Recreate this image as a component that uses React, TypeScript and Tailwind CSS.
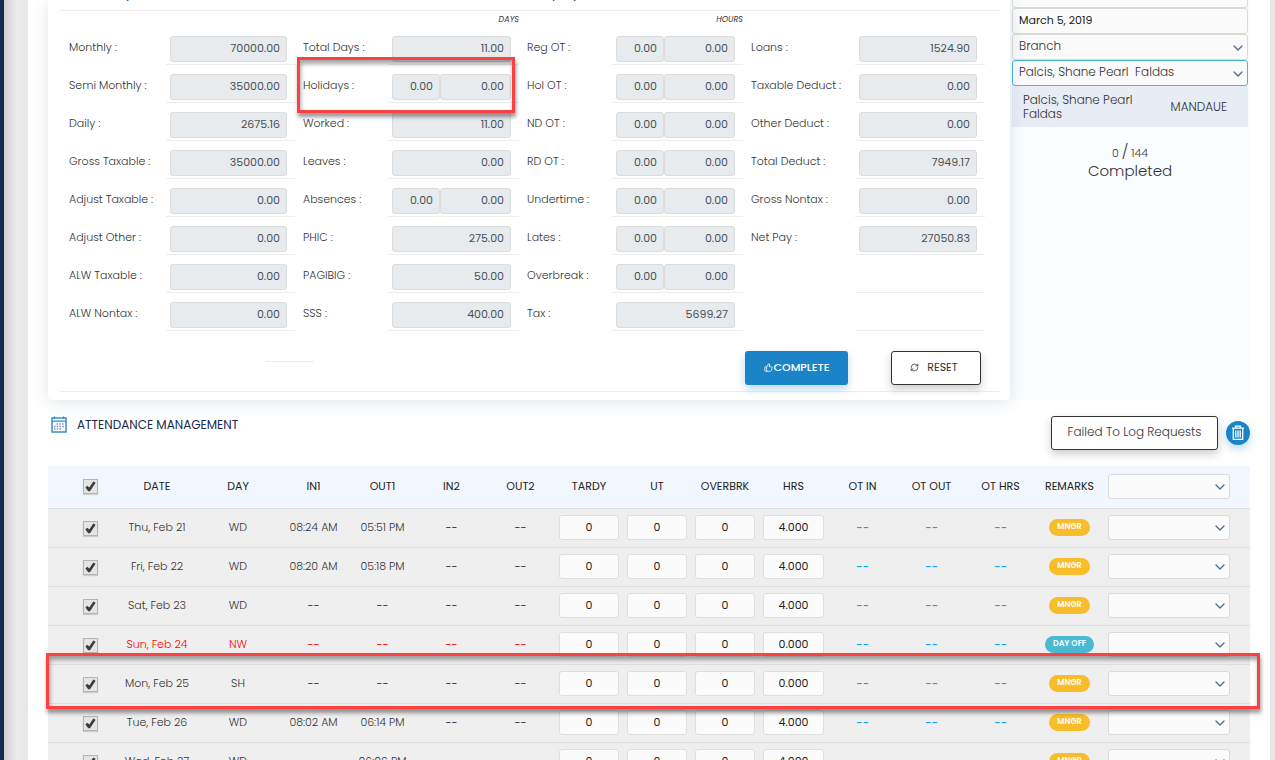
import React from "react";
import { LuChevronDown, LuRefreshCw, LuThumbsUp } from "react-icons/lu";

type Item = { label: string; values: string[]; marked?: boolean };

const columns: { unit?: string; cls: string; labelCls: string; items: Item[] }[] = [
  {
    cls: "w-[234px]",
    labelCls: "w-[97px]",
    items: [
      { label: "Monthly :", values: ["70000.00"] },
      { label: "Semi Monthly :", values: ["35000.00"] },
      { label: "Daily :", values: ["2675.16"] },
      { label: "Gross Taxable :", values: ["35000.00"] },
      { label: "Adjust Taxable :", values: ["0.00"] },
      { label: "Adjust Other :", values: ["0.00"] },
      { label: "ALW Taxable :", values: ["0.00"] },
      { label: "ALW Nontax :", values: ["0.00"] },
    ],
  },
  {
    unit: "DAYS",
    cls: "w-[224px]",
    labelCls: "w-[85px]",
    items: [
      { label: "Total Days :", values: ["11.00"] },
      { label: "Holidays :", values: ["0.00", "0.00"], marked: true },
      { label: "Worked :", values: ["11.00"] },
      { label: "Leaves :", values: ["0.00"] },
      { label: "Absences :", values: ["0.00", "0.00"] },
      { label: "PHIC :", values: ["275.00"] },
      { label: "PAGIBIG :", values: ["50.00"] },
      { label: "SSS :", values: ["400.00"] },
    ],
  },
  {
    unit: "HOURS",
    cls: "w-[224px]",
    labelCls: "w-[85px]",
    items: [
      { label: "Reg OT :", values: ["0.00", "0.00"] },
      { label: "Hol OT :", values: ["0.00", "0.00"] },
      { label: "ND OT :", values: ["0.00", "0.00"] },
      { label: "RD OT :", values: ["0.00", "0.00"] },
      { label: "Undertime :", values: ["0.00", "0.00"] },
      { label: "Lates :", values: ["0.00", "0.00"] },
      { label: "Overbreak :", values: ["0.00", "0.00"] },
      { label: "Tax :", values: ["5699.27"] },
    ],
  },
  {
    cls: "w-[242px]",
    labelCls: "w-[104px]",
    items: [
      { label: "Loans :", values: ["1524.90"] },
      { label: "Taxable Deduct :", values: ["0.00"] },
      { label: "Other Deduct :", values: ["0.00"] },
      { label: "Total Deduct :", values: ["7949.17"] },
      { label: "Gross Nontax :", values: ["0.00"] },
      { label: "Net Pay :", values: ["27050.83"] },
      { label: "", values: [] },
      { label: "", values: [] },
    ],
  },
];

const callout =
  "pointer-events-none absolute z-10 border-[3px] border-[#fb4141] shadow-[1px_4px_4px_rgba(0,0,0,0.4),inset_1px_4px_4px_rgba(0,0,0,0.35)]";

function AmountRow({ item, labelCls }: { item: Item; labelCls: string }) {
  const two = item.values.length === 2;
  return (
    <div className="relative flex h-[38px]">
      {item.label ? (
        <label htmlFor={item.label} className={`${labelCls} shrink-0 pt-2 leading-[18px] font-light`}>
          {item.label}
        </label>
      ) : (
        <span className={`${labelCls} shrink-0`} />
      )}
      <div className="mr-2 flex h-[35px] w-[131px] items-start border-b border-[#ececec] pt-[6px] pr-2 pl-1">
        {item.values.map((v, i) => (
          <input
            key={i}
            id={i === 0 ? item.label : undefined}
            aria-label={i > 0 ? `${item.label} hours` : undefined}
            readOnly
            defaultValue={v}
            className={`${two && i === 0 ? "w-12 shrink-0" : "w-0 grow"} h-[26px] min-w-0 rounded-[3px] border border-[#dadcde] bg-[#e8ebee] px-[6px] pb-[2px] text-right text-[11px] text-[#495057]`}
          />
        ))}
      </div>
      {item.marked && <div className={`${callout} -top-[11px] -left-[6px] h-14 w-[218px]`} />}
    </div>
  );
}

function Picker({ value, label, cls }: { value?: string; label: string; cls: string }) {
  return (
    <div className="relative">
      <select
        aria-label={label}
        className={`${cls} block w-full appearance-none rounded-[3px] border bg-[#fbfbfb] pb-[2px] pl-[6px] text-xs font-light text-[#333]`}
      >
        <option>{value ?? ""}</option>
      </select>
      <LuChevronDown className="pointer-events-none absolute right-[2px] bottom-1 size-4 text-[#50708c]" />
    </div>
  );
}

type Day = { date: string; day: string; in1: string; out1: string; hrs: string; off?: boolean; marked?: boolean };

const days: Day[] = [
  { date: "Thu, Feb 21", day: "WD", in1: "08:24 AM", out1: "05:51 PM", hrs: "4.000" },
  { date: "Fri, Feb 22", day: "WD", in1: "08:20 AM", out1: "05:18 PM", hrs: "4.000" },
  { date: "Sat, Feb 23", day: "WD", in1: "--", out1: "--", hrs: "4.000" },
  { date: "Sun, Feb 24", day: "NW", in1: "--", out1: "--", hrs: "0.000", off: true },
  { date: "Mon, Feb 25", day: "SH", in1: "--", out1: "--", hrs: "0.000", marked: true },
  { date: "Tue, Feb 26", day: "WD", in1: "08:02 AM", out1: "06:14 PM", hrs: "4.000" },
  { date: "Wed, Feb 27", day: "WD", in1: "--", out1: "06:06 PM", hrs: "4.000" },
];

const heads: [string, string][] = [
  ["DATE", "w-20"],
  ["DAY", "w-[82px]"],
  ["IN1", "w-[69px]"],
  ["OUT1", "w-[69px]"],
  ["IN2", "w-[69px]"],
  ["OUT2", "w-[69px]"],
  ["TARDY", "w-[68px]"],
  ["UT", "w-[68px]"],
  ["OVERBRK", "w-[68px]"],
  ["HRS", "w-[69px]"],
  ["OT IN", "w-[69px]"],
  ["OT OUT", "w-[69px]"],
  ["OT HRS", "w-[69px]"],
  ["REMARKS", "w-[69px]"],
];

function Tick({ label }: { label: string }) {
  return (
    <span className="relative ml-[35px] block size-[15px]">
      <input
        type="checkbox"
        defaultChecked
        aria-label={label}
        className="peer block size-[15px] appearance-none border border-[#b4b4b4] bg-[#e4e4e4] shadow-[0_1px_1px_rgba(0,0,0,0.15)]"
      />
      <svg viewBox="0 0 15 15" className="pointer-events-none absolute inset-0 hidden size-[15px] peer-checked:block">
        <path d="M2.4 8.4l1.9-1.7 2 1.7 4-6 2.3 1.4-5.6 8.4h-1.8z" fill="#3c3c3c" />
      </svg>
    </span>
  );
}

function DayRow({ d }: { d: Day }) {
  const tone = d.off ? "text-[#ff0000]" : "text-[#333]";
  return (
    <tr className="relative h-[39px] border-b border-[#dedede] bg-[#efefef]">
      <td className="pt-px">
        <Tick label={`Select ${d.date}`} />
        {d.marked && <div className={`${callout} -top-[11px] -right-[10px] -left-[2px] h-14`} />}
      </td>
      {[d.date, d.day, d.in1, d.out1, "--", "--"].map((t, i) => (
        <td key={i} className={`${tone} ${t === "--" ? "font-normal" : "font-light"} pb-px whitespace-nowrap`}>
          {t}
        </td>
      ))}
      {[
        ["Tardy", "0"],
        ["UT", "0"],
        ["Overbreak", "0"],
        ["Hours", d.hrs],
      ].map(([n, v]) => (
        <td key={n} className="px-1">
          <input
            aria-label={`${n} ${d.date}`}
            defaultValue={v}
            className="block h-[25px] w-full rounded-[3px] border border-[#dedede] bg-[#fbfbfb] pb-px text-center text-[11px] text-[#222]"
          />
        </td>
      ))}
      {[0, 1, 2].map((i) => (
        <td key={i} className="pb-px font-medium text-[#03a3ee]">
          --
        </td>
      ))}
      <td>
        <span
          className={`${d.off ? "bg-[#4ab9d2]" : "bg-[#f9bd2b]"} inline-block h-[17px] rounded-full px-2 align-middle text-[8px] leading-[15px] font-semibold whitespace-nowrap text-white`}
        >
          {d.off ? "DAY OFF" : "MNGR"}
        </span>
      </td>
      <td className="pr-5 pl-1">
        <Picker label={`Action ${d.date}`} cls="h-[25px] border-[#dadada]" />
      </td>
    </tr>
  );
}

function CalendarIcon() {
  return (
    <svg viewBox="0 0 16 17" className="h-[17px] w-4" fill="none" stroke="#2c86c8">
      <rect x="1" y="2" width="14" height="14" strokeWidth="1.4" />
      <path d="M1 5.2h14M3.5 .5v2.6M12.5 .5v2.6" strokeWidth="1.2" />
      <path d="M5.5 8h8M3 10.5h10.5M3 13h7" strokeDasharray="1.6 1.1" strokeWidth="1.4" stroke="#7c93cc" />
    </svg>
  );
}

function TrashIcon() {
  return (
    <svg viewBox="0 0 14 16" className="h-4 w-[14px]" fill="none" stroke="#fff" strokeWidth="1.3">
      <path d="M1 3.2h12M4.6 3V1.2h4.8V3M2.3 3.4v11h9.4v-11M4.8 5.5v7M7 5.5v7M9.2 5.5v7" />
    </svg>
  );
}

export default function App() {
  return (
    <div className="flex h-screen overflow-hidden bg-white font-['Poppins','Inter',sans-serif] text-[11px] text-[#333]">
      <div className="w-1 shrink-0 bg-[#172a54]" />
      <div className="w-6 shrink-0 bg-linear-to-r from-[#cfcfd0] via-[#ececec] to-[#e5e6e8]" />
      <main className="min-w-0 grow px-5">
        <div className="flex h-[400px]">
          <section className="relative z-[1] flex min-w-0 grow flex-col rounded-b bg-white px-3 shadow-[0_2px_16px_rgba(100,120,150,0.2)]">
            <div className="mr-[-2px] flex h-[11px] shrink-0 items-end overflow-hidden border-b border-[#ececec] text-[13px] leading-5">
              <h2 className="mb-[6px] w-[472px] shrink-0 pl-[26px]">Description</h2>
              <h2 className="mb-[6px]">Employee</h2>
            </div>
            <div className="flex shrink-0 justify-between pr-[5px] pl-[9px]">
              {columns.map((c, n) => (
                <div key={n} className={c.cls}>
                  <div className="h-[19px] pr-2 text-right text-[8px] leading-[18px] italic">{c.unit}</div>
                  {c.items.map((item, i) => (
                    <AmountRow key={i} item={item} labelCls={c.labelCls} />
                  ))}
                </div>
              ))}
            </div>
            <div className="ml-[206px] h-[28px] w-12 shrink-0 border-b border-[#ececec]" />
            <div className="-mt-[11px] mr-[-2px] flex h-[41px] shrink-0 justify-end gap-[43px] border-b border-[#ececec] pr-[19px]">
              <button
                type="button"
                className="flex h-[34px] w-[103px] items-center justify-center rounded-[3px] bg-[#1b84c9] pb-[2px] font-medium text-white shadow-[0_4px_8px_rgba(27,132,201,0.3)]"
              >
                <LuThumbsUp className="mr-px size-[9px]" />
                COMPLETE
              </button>
              <button
                type="button"
                className="flex h-[34px] w-[90px] items-center justify-center gap-2 rounded-[3px] border border-[#333] bg-white pr-1 pb-[2px] shadow-[0_4px_8px_rgba(0,0,0,0.2)]"
              >
                <LuRefreshCw className="size-[9px]" />
                RESET
              </button>
            </div>
          </section>
          <aside className="w-[240px] shrink-0 overflow-hidden bg-[#f9fdff] px-[2px] text-xs">
            <input
              aria-label="Period"
              className="-mt-[18px] block h-[26px] w-full rounded-[3px] border border-[#dadada] bg-[#fbfbfb]"
            />
            <input
              aria-label="Date"
              defaultValue="March 5, 2019"
              className="block h-[26px] w-full rounded-[3px] border border-[#dadada] bg-[#fbfbfb] pb-[2px] pl-[6px] text-[11px] text-[#222]"
            />
            <Picker label="Branch" value="Branch" cls="h-[26px] border-[#dadada]" />
            <Picker label="Employee" value={"Palcis, Shane Pearl\u00a0 Faldas"} cls="h-[26px] border-[#46b8cf]" />
            <div className="flex h-[41px] items-center justify-between bg-[#e8ecf4] pr-[21px] pl-[11px] font-light">
              <p className="w-[120px] leading-[14px]">Palcis, Shane Pearl Faldas</p>
              <p>MANDAUE</p>
            </div>
            <div className="pt-4 text-center font-light">
              <p className="text-[11px] leading-[17px]">
                0 <span className="text-[15px]">/</span> 144
              </p>
              <p className="text-[15px] leading-[18px]">Completed</p>
            </div>
          </aside>
        </div>
        <div className="flex h-[66px] items-start justify-between pt-4">
          <h2 className="flex items-center gap-[10px] pl-[3px] text-xs text-[#1b2a4e]">
            <CalendarIcon />
            ATTENDANCE MANAGEMENT
          </h2>
          <div className="flex items-center gap-2">
            <button
              type="button"
              className="h-[34px] w-[167px] rounded-[3px] border border-[#333] bg-white pb-[2px] text-xs font-light shadow-[0_4px_8px_rgba(0,0,0,0.2)]"
            >
              Failed To Log Requests
            </button>
            <button
              type="button"
              aria-label="Delete"
              className="flex size-6 items-center justify-center rounded-full bg-[#1b84c9] shadow-[0_4px_8px_rgba(27,132,201,0.3)]"
            >
              <TrashIcon />
            </button>
          </div>
        </div>
        <table className="w-full table-fixed border-collapse text-center">
          <thead>
            <tr className="h-[42px] border-b border-[#dedede] bg-[#f2f7ff] text-[#222]">
              <th className="w-[69px]">
                <Tick label="Select all" />
              </th>
              {heads.map(([h, w]) => (
                <th key={h} className={`${w} pb-px font-normal whitespace-nowrap`}>
                  {h}
                </th>
              ))}
              <th className="w-[146px] pr-5 pl-1">
                <Picker label="Action for all" cls="h-[25px] border-[#dadada]" />
              </th>
            </tr>
          </thead>
          <tbody>
            {days.map((d) => (
              <DayRow key={d.date} d={d} />
            ))}
          </tbody>
        </table>
      </main>
      <div className="w-[5px] shrink-0 bg-[#e6e7e9]" />
    </div>
  );
}
